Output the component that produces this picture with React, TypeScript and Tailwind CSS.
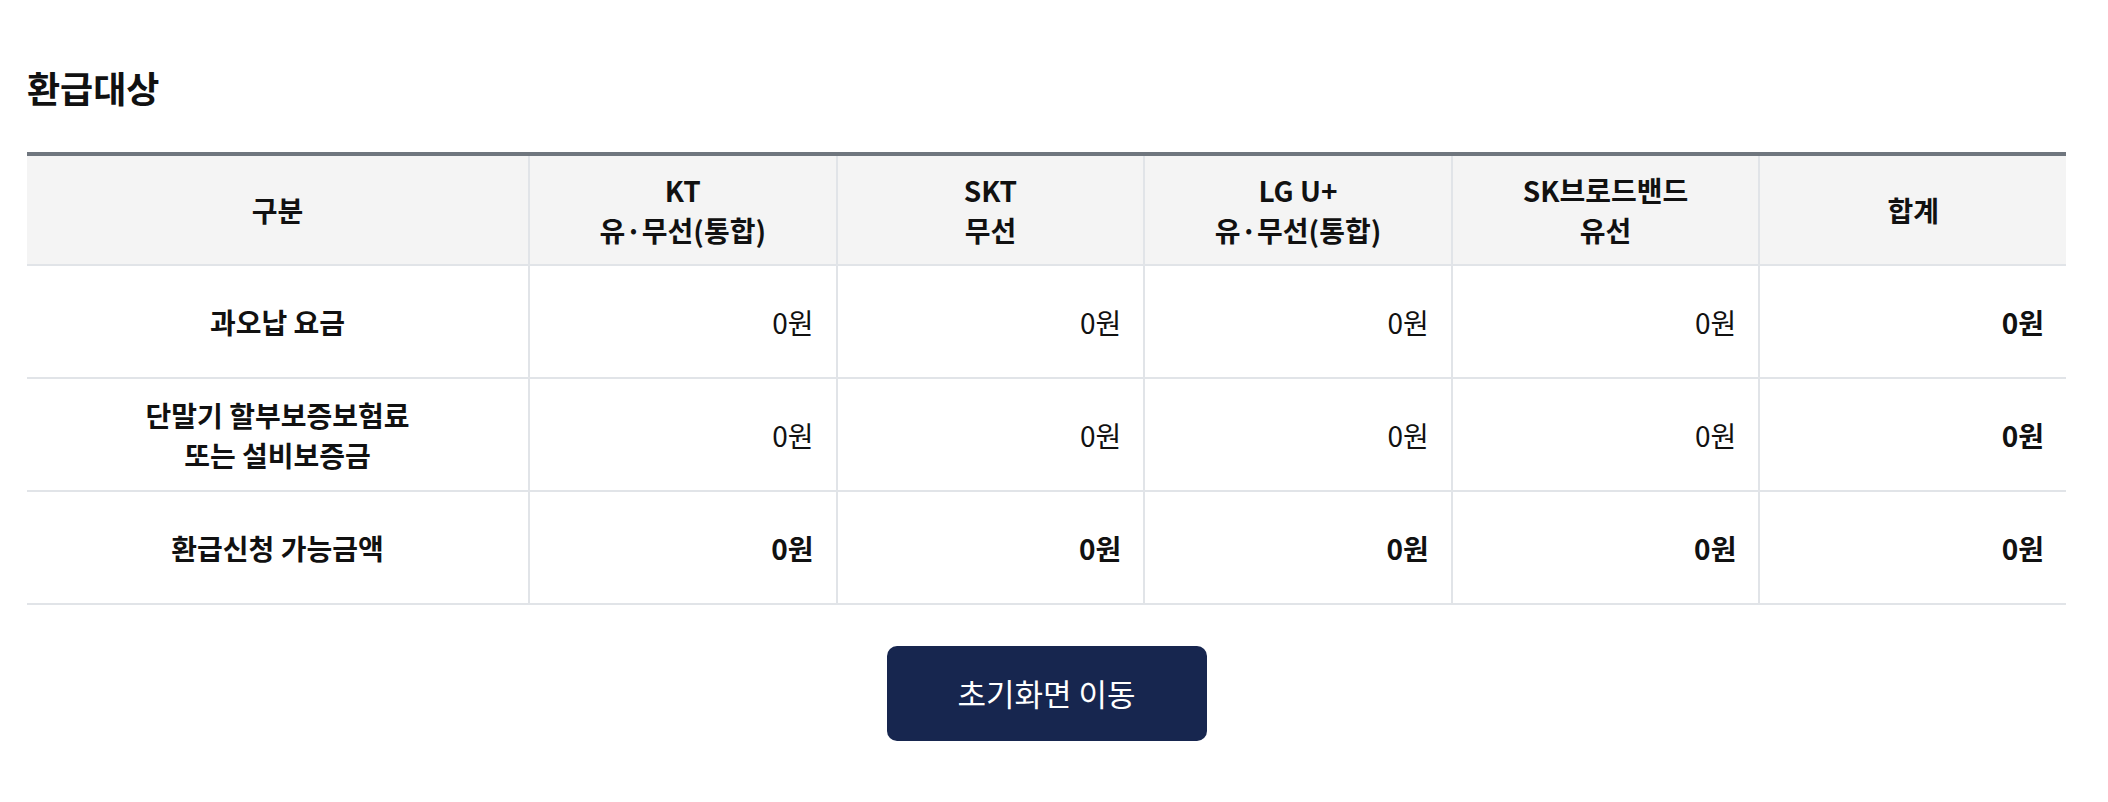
import React from 'react';

// Một ô số tiền theo từng nhà mạng
interface RefundRow {
    label: string[];
    values: string[];
    total: string;
    strong?: boolean;
}

const headers: string[][] = [
    ['KT', '유·무선(통합)'],
    ['SKT', '무선'],
    ['LG U+', '유·무선(통합)'],
    ['SK브로드밴드', '유선'],
    ['합계'],
];

const rows: RefundRow[] = [
    { label: ['과오납 요금'], values: ['0원', '0원', '0원', '0원'], total: '0원' },
    { label: ['단말기 할부보증보험료', '또는 설비보증금'], values: ['0원', '0원', '0원', '0원'], total: '0원' },
    { label: ['환급신청 가능금액'], values: ['0원', '0원', '0원', '0원'], total: '0원', strong: true },
];

const font = { fontFamily: '"Noto Sans CJK KR", "Noto Sans", sans-serif' };

const App: React.FC = () => {
    return (
        <div className="min-h-screen bg-white pt-[63px] pl-[27px] pr-[42px] text-[#111]" style={font}>
            <h2 className="text-[36px] font-bold leading-[48px]">환급대상</h2>

            {/* Bảng hoàn tiền */}
            <div className="mt-[41px] border-t-[4px] border-[#6f767e]">
                <div className="grid h-[110px] grid-cols-[501px_repeat(5,1fr)] border-b-2 border-[#e1e4e8] bg-[#f4f4f4]">
                    <div className="flex items-center justify-center text-[28px] font-bold leading-[40px]">구분</div>
                    {headers.map((h, i) => (
                        <div
                            key={i}
                            className="flex flex-col items-center justify-center border-l-2 border-[#e1e4e8] text-[28px] font-bold leading-[40px]"
                        >
                            {h.map((line) => (
                                <span key={line}>{line}</span>
                            ))}
                        </div>
                    ))}
                </div>

                {rows.map((row, ri) => (
                    <div
                        key={ri}
                        className="grid h-[113px] grid-cols-[501px_repeat(5,1fr)] border-b-2 border-[#e1e4e8]"
                    >
                        <div className="flex flex-col items-center justify-center text-[28px] font-bold leading-[40px]">
                            {row.label.map((line) => (
                                <span key={line}>{line}</span>
                            ))}
                        </div>
                        {row.values.map((v, vi) => (
                            <div
                                key={vi}
                                className={`flex items-center justify-end border-l-2 border-[#e1e4e8] pr-[22px] text-[28px] leading-[40px] ${
                                    row.strong ? 'font-bold' : 'font-normal'
                                }`}
                            >
                                {v}
                            </div>
                        ))}
                        <div className="flex items-center justify-end border-l-2 border-[#e1e4e8] pr-[22px] text-[28px] font-bold leading-[40px]">
                            {row.total}
                        </div>
                    </div>
                ))}
            </div>

            <div className="mt-[41px] flex justify-center">
                <button
                    type="button"
                    className="h-[95px] w-[320px] rounded-[10px] bg-[#17264f] text-[31px] font-normal text-white"
                >
                    초기화면 이동
                </button>
            </div>
        </div>
    );
};

export default App;
